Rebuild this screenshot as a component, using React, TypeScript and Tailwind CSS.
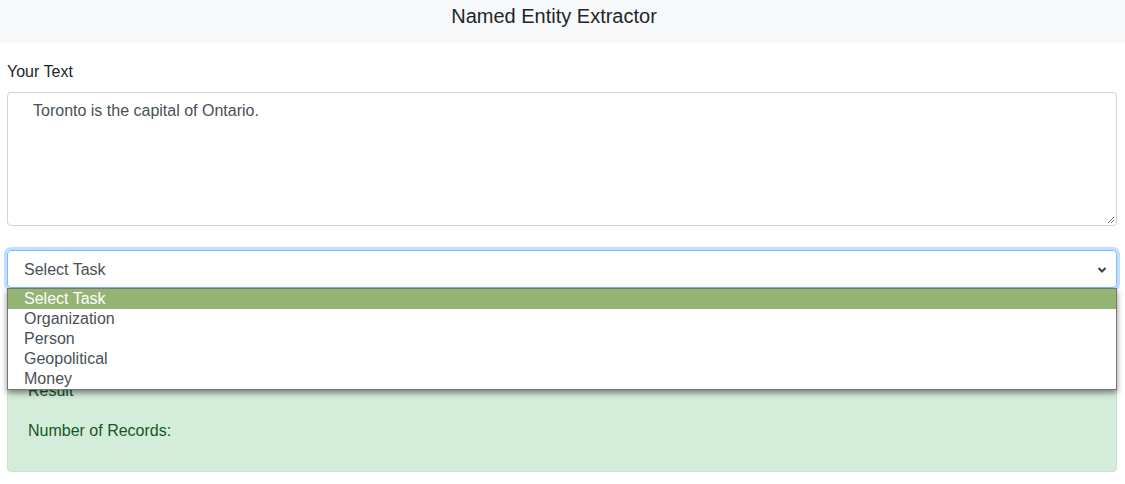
const options = ["Select Task", "Organization", "Person", "Geopolitical", "Money"];

export default function App() {
  return (
    <div className="min-h-[484px] bg-white font-['Liberation_Sans',Arial,sans-serif] text-[#212529]">
      <header className="flex h-[43px] items-start justify-center bg-[#f8f9fa] pr-[17px] pt-[1px]">
        <h1 className="text-[20px] leading-[30px]">Named Entity Extractor</h1>
      </header>

      <main className="pl-[7px] pr-[8px]">
        <label className="mt-[17px] mb-[8px] block text-[16px] leading-6">Your Text</label>
        <div className="relative h-[134px] rounded border border-[#ced4da] pl-[25px] pt-[6px] text-[16px] leading-6 text-[#495057]">
          Toronto is the capital of Ontario.
          <svg className="absolute right-[1px] bottom-[1px]" width="9" height="9" viewBox="0 0 9 9">
            <path d="M8 2 L2 8 M8 5 L5 8" stroke="#6b6b6b" strokeWidth="1" />
          </svg>
        </div>

        <div className="relative mt-6">
          <div className="flex h-[38px] items-center justify-between rounded border border-[#80bdff] pl-[16px] pr-[9px] pt-[1px] text-[16px] text-[#495057] shadow-[0_0_0_3px_rgba(0,123,255,0.25)]">
            <span>Select Task</span>
            <svg width="10" height="8" viewBox="0 0 10 8">
              <path d="M1.5 2 L5 5.5 L8.5 2" fill="none" stroke="#3b3f44" strokeWidth="2" />
            </svg>
          </div>

          <ul className="absolute left-0 right-0 top-[38px] z-10 border border-[#767676] bg-white shadow-[0_3px_6px_rgba(0,0,0,0.45)]">
            {options.map((o, i) => (
              <li
                key={o}
                className={
                  i === 0
                    ? "h-[20px] bg-[#93b473] pl-[16px] text-[16px] leading-[19px] text-white"
                    : "h-[20px] pl-[16px] text-[16px] leading-[19px] text-[#495057]"
                }
              >
                {o}
              </li>
            ))}
          </ul>
        </div>

        <div className="mt-[78px] rounded border border-[#c3e6cb] bg-[#d4edda] px-5 pt-3 pb-[12px] text-[16px] leading-6 text-[#155724]">
          <p className="mb-4">Result</p>
          <p className="mb-4">Number of Records:</p>
        </div>
      </main>
    </div>
  );
}
